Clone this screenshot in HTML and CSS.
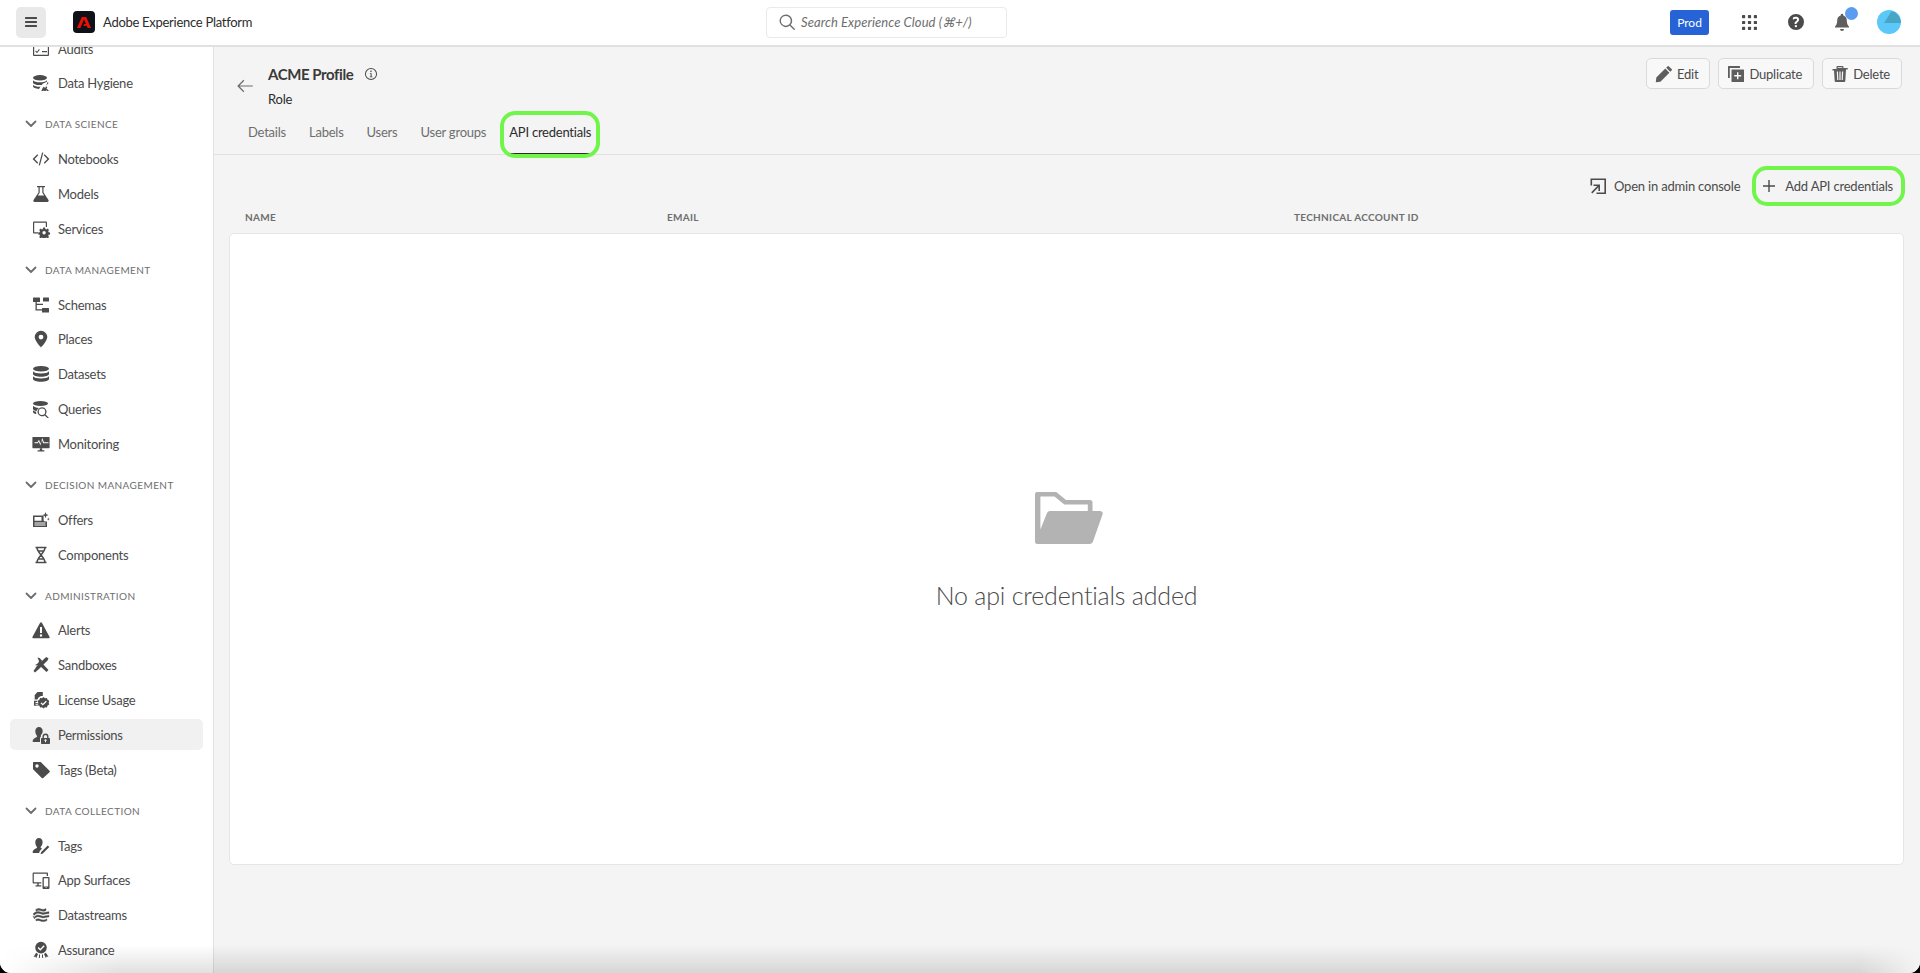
FILE: index.html
```html
<!DOCTYPE html>
<html lang="en">
<head>
<meta charset="utf-8">
<title>Adobe Experience Platform</title>
<link rel="stylesheet" href="styles.css">
</head>
<body>
<div class="app">
  <header class="topbar">
    <div class="brand">
      <button class="menu-btn" aria-label="Menu"><svg class="ico" viewBox="0 0 18 18"><rect x="3" y="4" width="12" height="2" rx=".6"/><rect x="3" y="8" width="12" height="2" rx=".6"/><rect x="3" y="12" width="12" height="2" rx=".6"/></svg></button>
      <div class="logo"><svg viewBox="0 0 22 22"><path fill="#eb1000" d="M8.800 6h4.400L18 17h-3.300l-.9-2.300h-3.600L11.100 13H13l-2-4.700L7.400 17H4z"/></svg></div>
      <span class="product">Adobe Experience Platform</span>
    </div>
    <div class="search">
      <svg class="ico search-ico" viewBox="0 0 18 18"><path d="M7.800 1.500a6.300 6.300 0 0 1 4.900 10.300l4 4a.7.7 0 0 1-1 1l-4-4A6.300 6.300 0 1 1 7.800 1.500zm0 1.400a4.900 4.900 0 1 0 0 9.800 4.900 4.900 0 0 0 0-9.800z"/></svg>
      <span>Search Experience Cloud (⌘+/)</span>
    </div>
    <div class="top-right">
      <span class="prod">Prod</span>
      <svg class="ico apps" viewBox="0 0 16 16"><rect x="0" y="0" width="3.400" height="3.400" rx=".7"/><rect x="6.300" y="0" width="3.400" height="3.400" rx=".7"/><rect x="12.600" y="0" width="3.400" height="3.400" rx=".7"/><rect x="0" y="6.300" width="3.400" height="3.400" rx=".7"/><rect x="6.300" y="6.300" width="3.400" height="3.400" rx=".7"/><rect x="12.600" y="6.300" width="3.400" height="3.400" rx=".7"/><rect x="0" y="12.600" width="3.400" height="3.400" rx=".7"/><rect x="6.300" y="12.600" width="3.400" height="3.400" rx=".7"/><rect x="12.600" y="12.600" width="3.400" height="3.400" rx=".7"/></svg>
      <svg class="ico help" viewBox="0 0 18 18"><path fill-rule="evenodd" d="M9 1a8 8 0 1 1 0 16A8 8 0 0 1 9 1zm-.1 10.900a1.200 1.200 0 1 0 0 2.400 1.200 1.200 0 0 0 0-2.400zM9.100 3.800c-1.300 0-2.500.4-3.200 1v1.900c.8-.6 1.800-1 2.800-1 .9 0 1.400.4 1.400 1 0 .6-.5 1-1.200 1.600-.9.7-1.300 1.300-1.300 2.200v.6h1.900v-.4c0-.5.3-.8 1-1.400.9-.7 1.600-1.500 1.600-2.700 0-1.700-1.300-2.800-3-2.800z"/></svg>
      <span class="bell-wrap">
        <svg class="ico bell" viewBox="0 0 18 18"><path d="M9 .8a1.300 1.300 0 0 1 1.300 1.300v.5c2.300.6 3.500 2.600 3.500 5 0 3.200.9 4.800 2.200 6v1H2v-1c1.300-1.200 2.200-2.800 2.200-6 0-2.400 1.200-4.400 3.500-5v-.5A1.300 1.300 0 0 1 9 .8zM7 16h4a2 2 0 0 1-4 0z"/></svg>
        <span class="dot"></span>
      </span>
      <svg class="avatar" viewBox="0 0 24 24"><circle cx="12" cy="12" r="12" fill="#5cc8f9"/><path fill="#48a5c6" d="M14.500 1.300A12 12 0 0 1 24 12v1H7z"/></svg>
    </div>
  </header>

  <div class="body">
    <nav class="sidebar">
      <div class="nav-inner">
        <a class="nav-item"><svg class="ico" viewBox="0 0 18 18"><path fill-rule="evenodd" d="M2 2h14a1 1 0 0 1 1 1v12a1 1 0 0 1-1 1H2a1 1 0 0 1-1-1V3a1 1 0 0 1 1-1zm.2 1.200v11.600h13.600V3.200z"/><path d="M4 10.500l1 1.200 2-2.600.8.600-2.800 3.600-1.800-2.100zM10 11h5v1.200h-5z"/></svg>Audits</a>
        <a class="nav-item"><svg class="ico" viewBox="0 0 18 18"><ellipse cx="8" cy="3.800" rx="7" ry="2.700"/><path d="M1 6.200c1 1.400 3.800 2.100 7 2.100s6-.7 7-2.100v1.500l-4 1.900-1.300 1.300c-.5 0-1.100.1-1.700.1-3.900 0-7-1.100-7-2.600zM1 10.700c1 1.400 3.800 2.100 7 2.100h.4L7 14.900C3.600 14.700 1 13.600 1 12.300z"/><path d="M15.600 8.100l1 .8-2.700 3 1.500 1.500-1 .9L17 17h-2l-.9-1-.3 1h-1.600l-.2-1-.5 1H9.300l1.500-3.300 1-1 1.500 1.300z"/></svg>Data Hygiene</a>

        <div class="nav-head"><svg class="chev" viewBox="0 0 12 8"><path d="M1.500 1.500L6 6l4.500-4.500" fill="none" stroke="currentColor" stroke-width="1.800" stroke-linecap="round" stroke-linejoin="round"/></svg>Data Science</div>
        <a class="nav-item"><svg class="ico" viewBox="0 0 18 18"><path d="M5.300 4.300l.9 1-3.600 3.700 3.600 3.700-.9 1L.6 9zM12.700 4.300l4.700 4.700-4.700 4.700-.9-1 3.600-3.700-3.600-3.700zM10.100 2.500l1.200.3-3.400 12.700-1.200-.3z"/></svg>Notebooks</a>
        <a class="nav-item"><svg class="ico" viewBox="0 0 18 18"><path d="M5 1h8v1.300h-1.500v5.100L16.500 15a1.300 1.300 0 0 1-1.100 2H2.600a1.300 1.300 0 0 1-1.100-2l5-7.600V2.300H5zm2.700 1.300v5.400L5.900 10.400h6.200l-1.800-2.700V2.300z"/></svg>Models</a>
        <a class="nav-item"><svg class="ico" viewBox="0 0 18 18"><path d="M2 1.500h12a1 1 0 0 1 1 1V7h-1.200V2.700H2.200v9.600H6v1.200H2a1 1 0 0 1-1-1v-10a1 1 0 0 1 1-1z"/><path fill-rule="evenodd" d="M11.200 7.500h1.800l.4 1.500 1 .4 1.300-.8 1.300 1.300-.8 1.300.4 1 1.400.4v1.800l-1.400.4-.4 1 .8 1.300-1.300 1.300-1.300-.8-1 .4-.4 1.300h-1.800l-.4-1.300-1-.4-1.300.8-1.300-1.300.8-1.300-.4-1-1.400-.4v-1.800l1.400-.4.4-1-.8-1.300 1.300-1.300 1.300.8 1-.4zm.9 3.500a1.700 1.700 0 1 0 0 3.400 1.700 1.700 0 0 0 0-3.400z"/></svg>Services</a>

        <div class="nav-head"><svg class="chev" viewBox="0 0 12 8"><path d="M1.500 1.500L6 6l4.500-4.500" fill="none" stroke="currentColor" stroke-width="1.800" stroke-linecap="round" stroke-linejoin="round"/></svg>Data Management</div>
        <a class="nav-item"><svg class="ico" viewBox="0 0 18 18"><rect x="1" y="1.500" width="7" height="4.500" rx=".5"/><rect x="11" y="1.500" width="6" height="4" rx=".5"/><rect x="10" y="12" width="7" height="4.500" rx=".5"/><path d="M3.500 6h1.300v1.700H11V9H4.800v4.200H10v1.300H3.500z"/></svg>Schemas</a>
        <a class="nav-item"><svg class="ico" viewBox="0 0 18 18"><path fill-rule="evenodd" d="M9 .8a6.300 6.300 0 0 1 6.300 6.300C15.300 11 9 17.500 9 17.500S2.700 11 2.700 7.100A6.300 6.300 0 0 1 9 .8zm0 3.900a2.400 2.400 0 1 0 0 4.800 2.400 2.400 0 0 0 0-4.800z"/></svg>Places</a>
        <a class="nav-item"><svg class="ico" viewBox="0 0 18 18"><ellipse cx="9" cy="3.800" rx="8" ry="2.800"/><path d="M1 6.300c1 1.500 4.300 2.200 8 2.200s7-.7 8-2.200V9c0 1.500-3.600 2.700-8 2.700S1 10.500 1 9zM1 11.300c1 1.500 4.300 2.200 8 2.200s7-.7 8-2.200V14c0 1.500-3.600 2.700-8 2.700S1 15.500 1 14z"/></svg>Datasets</a>
        <a class="nav-item"><svg class="ico" viewBox="0 0 18 18"><ellipse cx="8.500" cy="3.500" rx="7.500" ry="2.500"/><path d="M1 5.700c.8 1.200 3.400 2 6 2.200a6 6 0 0 0-2.500 3C2.600 10.600 1 9.800 1 8.700zM1 10.300c.7.700 1.900 1.200 3.200 1.500v2.400C2.400 13.800 1 13 1 12z"/><path fill-rule="evenodd" d="M10 7.300a4.500 4.500 0 0 1 3.600 7.200l3.200 3.200-.9.900-3.200-3.200A4.500 4.500 0 1 1 10 7.300zm0 1.300a3.200 3.200 0 1 0 0 6.400 3.200 3.200 0 0 0 0-6.400z"/></svg>Queries</a>
        <a class="nav-item"><svg class="ico" viewBox="0 0 18 18"><path fill-rule="evenodd" d="M1 2h16a.6.600 0 0 1 .6.600v10a.6.600 0 0 1-.6.600H1a.6.600 0 0 1-.6-.6v-10A.6.600 0 0 1 1 2zm1.500 5.200v1h3.300l1-1.800 1.500 4 1.600-5.400 1.300 3.200h5.300v-1h-4.600L10.300 3l-1.800 5.400L7 4.800 5.300 7.200z"/><path d="M7.800 13.200h2.400v2h2.200v1.300H5.600v-1.300h2.200z"/></svg>Monitoring</a>

        <div class="nav-head"><svg class="chev" viewBox="0 0 12 8"><path d="M1.500 1.500L6 6l4.500-4.500" fill="none" stroke="currentColor" stroke-width="1.800" stroke-linecap="round" stroke-linejoin="round"/></svg>Decision Management</div>
        <a class="nav-item"><svg class="ico" viewBox="0 0 18 18"><path fill-rule="evenodd" d="M1 4.500h10.600v5a2 2 0 0 0 2 1h1.400V16H1zm1.500 1.600v3.700h7V6.100zM2.500 11.500v1h11v-1zm0 2v1h11v-1z"/><path d="M13.500 1l.8 2.300 2.200.8-2.200.8-.8 2.300-.8-2.300-2.200-.8 2.200-.8zM16.300 6.500l.4 1.200 1.100.4-1.100.4-.4 1.200-.4-1.200-1.100-.4 1.100-.4z"/></svg>Offers</a>
        <a class="nav-item"><svg class="ico" viewBox="0 0 18 18"><path fill="none" stroke="currentColor" stroke-width="1.500" d="M3.500 1.500h11M3.500 16.500h11M5 1.500c0 5.500 8 9.500 8 15M13 1.500c0 5.500-8 9.500-8 15M5.800 5h6.400M5.800 13h6.400"/></svg>Components</a>

        <div class="nav-head"><svg class="chev" viewBox="0 0 12 8"><path d="M1.500 1.500L6 6l4.500-4.500" fill="none" stroke="currentColor" stroke-width="1.800" stroke-linecap="round" stroke-linejoin="round"/></svg>Administration</div>
        <a class="nav-item"><svg class="ico" viewBox="0 0 18 18"><path fill-rule="evenodd" d="M9 1.200c.4 0 .7.200.9.500l7.700 14.400c.3.600-.1 1.200-.8 1.200H1.200c-.7 0-1.100-.6-.8-1.200L8.100 1.700c.2-.3.500-.5.900-.5zM8 6v6h2V6zm1 7.300a1.200 1.200 0 1 0 0 2.400 1.200 1.200 0 0 0 0-2.400z"/></svg>Alerts</a>
        <a class="nav-item"><svg class="ico" viewBox="0 0 18 18"><path d="M5.500 1.500l2 .5 2.500 2.500-.5 2 7 7.500-2 2-7.500-7-2 .5L3 9l2-1 1.500-1.500L7 5z"/><path d="M14.500 1l2 1.500-1 2-8.500 8.500-4 3.500-1.500-1.500 3-4.500 8.500-8.500z"/></svg>Sandboxes</a>
        <a class="nav-item"><svg class="ico" viewBox="0 0 18 18"><path d="M5.500 1h5.300v4H9a5.500 5.500 0 0 0-3.600 3.600H2.700V4zM2 9.800h3.300c0 .4 0 .8.100 1.200H3.500v1.200h2.200c.2.400.4.800.7 1.100H3.500v1.200H7.500c.3.200.6.400.9.500H3a1 1 0 0 1-1-1z"/><path fill-rule="evenodd" d="M11.500 6l1.500 1.200 1.900-.2.700 1.800 1.600 1-.5 1.900.5 1.900-1.600 1-.7 1.800-1.900-.2-1.500 1.200-1.500-1.200-1.900.2-.7-1.800-1.600-1 .5-1.900-.5-1.900 1.600-1 .7-1.800 1.900.2zm2.400 3.800l-3.100 3-1.400-1.400-.9.900 2.300 2.300 4-3.900z"/></svg>License Usage</a>
        <a class="nav-item active"><svg class="ico" viewBox="0 0 18 18"><path d="M7 1c2.200 0 3.700 1.800 3.700 4.100 0 1.700-.7 3.100-1.800 4v1.300a4 4 0 0 0-.9 2.400V16H1.500a.9.900 0 0 1-.9-1.100c.4-2.100 2.500-3 3.800-3.700.6-.3.700-.7.700-1.200C4.100 9.200 3.300 7.400 3.300 5.100 3.300 2.800 4.800 1 7 1z"/><path fill-rule="evenodd" d="M13.500 7.500a3 3 0 0 1 3 3V12h.7a.8.800 0 0 1 .8.800v4.400a.8.800 0 0 1-.8.800H9.800a.8.800 0 0 1-.8-.8v-4.400a.8.800 0 0 1 .8-.8h.7v-1.500a3 3 0 0 1 3-3zm0 1.400a1.600 1.600 0 0 0-1.600 1.600V12h3.200v-1.500a1.600 1.600 0 0 0-1.600-1.600zm0 4.400a1 1 0 0 0-.5 1.900v1h1v-1a1 1 0 0 0-.5-1.900z"/></svg>Permissions</a>
        <a class="nav-item"><svg class="ico" viewBox="0 0 18 18"><path fill-rule="evenodd" d="M1.500 1h6.700c.3 0 .6.100.8.300l8.500 8.500a1 1 0 0 1 0 1.400L11.200 17a1 1 0 0 1-1.400 0L1.300 8.500a1 1 0 0 1-.3-.8V1.500a.5.500 0 0 1 .5-.5zM5 3.300a1.700 1.700 0 1 0 0 3.400 1.700 1.700 0 0 0 0-3.400z"/></svg>Tags (Beta)</a>

        <div class="nav-head"><svg class="chev" viewBox="0 0 12 8"><path d="M1.500 1.500L6 6l4.500-4.500" fill="none" stroke="currentColor" stroke-width="1.800" stroke-linecap="round" stroke-linejoin="round"/></svg>Data Collection</div>
        <a class="nav-item"><svg class="ico" viewBox="0 0 18 18"><path d="M7 1c2.200 0 3.600 1.800 3.600 4 0 2.200-.8 4-2 4.900 0 .6.100 1 .7 1.300l.8.400-2.300 2.400-.7 2H1.500a.9.900 0 0 1-.9-1.100c.4-2.100 2.500-3 3.800-3.700.6-.3.700-.7.700-1.200C4 9.200 3.300 7.300 3.300 5 3.300 2.800 4.800 1 7 1z"/><path d="M15.700 8.500l1.600 1.600-6.500 6.500-2.300.7.700-2.300z"/></svg>Tags</a>
        <a class="nav-item"><svg class="ico" viewBox="0 0 18 18"><path d="M1.500 1.500h13.600a.9.900 0 0 1 .9.900V5h-1.300V2.800H1.800v8.400h7.500v1.300H6.700v1.800h2.600v1.200H3.500v-1.200h1.800v-1.800H1.500a.9.900 0 0 1-.9-.9V2.400a.9.900 0 0 1 .9-.9z"/><path fill-rule="evenodd" d="M11.500 6h5a1 1 0 0 1 1 1v10a1 1 0 0 1-1 1h-5a1 1 0 0 1-1-1V7a1 1 0 0 1 1-1zm.3 1.300v8.300h4.400V7.300zm2.200 8.800a.5.500 0 1 0 0 1 .5.500 0 0 0 0-1z"/></svg>App Surfaces</a>
        <a class="nav-item"><svg class="ico heavy" viewBox="0 0 18 18"><path d="M7 2.500c1.800 0 2.500 1 4 1 1.300 0 2-.5 3-.9v1.800c-1 .5-1.800.9-3 .9-1.600 0-2.300-1-4-1-1.100 0-1.700.4-2.300.9L3.400 4C4.200 3.200 5.400 2.500 7 2.500zM1 8c1.300-1.500 2.800-2.500 5-2.500s3.300 1.200 5 1.200c1.600 0 3.100-.9 6-1v1.700c-2.500.1-4 1-6 1-1.800 0-3-1.200-5-1.200C4.500 7.200 3.500 8 2.300 9.200zM1 9.800l1.300 1.200c1.200-1.200 2.200-2 3.700-2 2 0 3.200 1.200 5 1.200 2 0 3.500-.9 6-1v1.700c-2.500.1-4 1-6 1-1.800 0-3-1.200-5-1.200-1.500 0-2.500.8-3.700 2zM3.500 13.700c.7-.5 1.500-1 2.500-1 1.800 0 2.800 1.200 5 1.200 1.800 0 2.800-.5 4-1v1.700c-1.200.5-2.200 1-4 1-2.200 0-3.200-1.200-5-1.200-.6 0-1.100.2-1.500.5z"/></svg>Datastreams</a>
        <a class="nav-item"><svg class="ico" viewBox="0 0 18 18"><path fill-rule="evenodd" d="M9 .8a5.800 5.800 0 1 1 0 11.600A5.800 5.800 0 0 1 9 .8zm2.700 3.400L8.300 7.700 6.600 6 5.600 7l2.700 2.700 4.400-4.500z"/><path d="M4.200 11.800l1.800 1.200-1.800 4.200-.9-1.600-1.800.3zM13.800 11.800l2.700 3.900-1.800-.3-.9 1.600L12 13z"/><path d="M7 13.400l1 .2v2.800l-1.300.8.300-1.800zM11 13.400l-1 .2v2.800l1.300.8-.3-1.800z"/></svg>Assurance</a>
      </div>
    </nav>

    <main class="main">
      <section class="page-head">
        <svg class="back" viewBox="0 0 18 18"><path d="M7.400 2.800l.9.900L3.600 8.400h13.200v1.200H3.600l4.700 4.700-.9.900L1.200 9z"/></svg>
        <div class="titles">
          <div class="title-row"><h1>ACME Profile</h1><svg class="info" viewBox="0 0 18 18"><path fill-rule="evenodd" d="M9 1.200a7.800 7.800 0 1 1 0 15.600A7.800 7.800 0 0 1 9 1.200zm0 1.300a6.500 6.500 0 1 0 0 13 6.500 6.500 0 0 0 0-13zM9 4.500a1 1 0 1 1 0 2.100 1 1 0 0 1 0-2.100zM7.500 8h2.300v4.200h1v1.100H7.400v-1.100h1.100V9.100h-1z"/></svg></div>
          <div class="subtitle">Role</div>
        </div>
        <div class="actions">
          <button class="btn"><svg class="ico" viewBox="0 0 18 18"><path d="M13.700 1.200l3.100 3.100a.7.700 0 0 1 0 1L15.300 6.800l-4.100-4.100 1.500-1.500a.7.700 0 0 1 1 0zM10.300 3.600l4.100 4.100-9 9L.8 17.200l.5-4.600z"/></svg>Edit</button>
          <button class="btn"><svg class="ico" viewBox="0 0 18 18"><path d="M1.500 1h11a.5.500 0 0 1 .5.500V3H2.800v10H1.500a.5.500 0 0 1-.5-.5v-11a.5.500 0 0 1 .5-.5z"/><path fill-rule="evenodd" d="M5 4.500h11.500a.5.500 0 0 1 .5.500v11.500a.5.500 0 0 1-.5.500H5a.5.500 0 0 1-.5-.5V5a.5.500 0 0 1 .5-.5zm5 2.800v2.800H7.200v1.400H10v2.800h1.400v-2.800h2.800v-1.400h-2.800V7.300z"/></svg>Duplicate</button>
          <button class="btn"><svg class="ico" viewBox="0 0 18 18"><path fill-rule="evenodd" d="M6.500 1h5a1 1 0 0 1 1 1v1h3.800a.5.500 0 0 1 .5.500v.7a.3.300 0 0 1-.3.300H15l-.7 11.600a1 1 0 0 1-1 .9H4.700a1 1 0 0 1-1-.9L3 5.500H1.700a.3.300 0 0 1-.3-.3v-.7a.5.500 0 0 1 .5-.5h3.600V2a1 1 0 0 1 1-1zm.2 1.200V3h4.600v-.8zM5.800 6.500l.4 8.500h1.200L7 6.500zm2.600 0V15h1.200V6.500zm3.800 0L11 6.500l-.4 8.500h1.200z"/></svg>Delete</button>
        </div>
      </section>
      <div class="tabs">
        <span class="tab">Details</span>
        <span class="tab">Labels</span>
        <span class="tab">Users</span>
        <span class="tab">User groups</span>
        <span class="tab selected">API credentials</span>
      </div>
      <div class="toolbar">
        <a class="tool"><svg class="ico" viewBox="0 0 18 18"><path d="M1.500 1.500h15.500v15.500H7.500v-1.600h7.900V3.100H3.100v5.400H1.500z"/><path d="M4.500 7.500h6.500V14H9.400v-3.700L3.300 16.400l-1.100-1.100 6.100-6.200H4.500z"/></svg>Open in admin console</a>
        <a class="tool add"><svg class="ico" viewBox="0 0 18 18"><path d="M8.300 3h1.400v5.300H15v1.400H9.700V15H8.300V9.700H3V8.300h5.300z"/></svg>Add API credentials</a>
      </div>
      <div class="cols">
        <span class="col-name">Name</span>
        <span class="col-email">Email</span>
        <span>Technical account ID</span>
      </div>
      <div class="card">
        <svg class="folder" viewBox="0 0 68 52"><path fill="#b3b3b3" d="M2 0h18c1.200 0 2 .4 2.800 1.200L31 8h24a2.500 2.500 0 0 1 2.500 2.500V19h7.500c2 0 3.200 1.500 2.600 3.300L58 49.500c-.6 1.600-1.700 2.500-3.400 2.500H2.500A2.500 2.500 0 0 1 0 49.500V2a2 2 0 0 1 2-2zm3.400 4.400v33L12 21c.6-1.300 1.700-2 3-2h37.800v-6.400H29.300L19.500 4.400z"/></svg>
        <p class="empty">No api credentials added</p>
      </div>
    </main>
  </div>
  <div class="bottom-shade"></div>
</div>
</body>
</html>
```

FILE: styles.css
```css
* { box-sizing: border-box; }
html, body { height: 100%; }
body { margin: 0; background: #000; font-family: "Lato", "Open Sans", sans-serif; color: #4b4b4b; overflow: hidden; }
.app { position: relative; height: 973px; display: flex; flex-direction: column; background: #fff; border-radius: 0 0 11px 11px; overflow: hidden; }
.ico { width: 18px; height: 18px; fill: currentColor; flex: none; }
.ico.heavy { stroke: currentColor; stroke-width: .4; }

.topbar { flex: none; height: 47px; display: flex; align-items: center; background: #fff; border-bottom: 2px solid #e1e1e1; padding-bottom: 1px; }
.brand { flex: 0 0 766px; display: flex; align-items: center; padding-left: 16px; }
.menu-btn { width: 30px; height: 31px; border: 0; border-radius: 5px; background: #e9e9e9; color: #4b4b4b; display: flex; align-items: center; justify-content: center; padding: 0; }
.logo { width: 22px; height: 22px; margin-left: 27px; background: #0f1118; border-radius: 4px; display: flex; }
.logo svg { width: 22px; height: 22px; }
.product { margin-left: 8px; font-size: 13px; letter-spacing: -.28px; color: #2c2c2c; }
.search { flex: 0 0 241px; height: 31px; border: 1px solid #eaeaea; border-radius: 4px; display: flex; align-items: center; padding-left: 11px; gap: 5px; font-size: 13px; letter-spacing: .08px; font-style: italic; color: #6e6e6e; }
.search-ico { color: #6e6e6e; }
.top-right { margin-left: auto; display: flex; align-items: center; padding-right: 19px; }
.prod { width: 39px; height: 25px; background: #2563d6; color: #fff; border-radius: 3px; font-size: 12px; display: flex; align-items: center; justify-content: center; }
.apps { width: 15px; height: 15px; margin-left: 33px; color: #4b4b4b; }
.help { margin-left: 30px; width: 18px; height: 18px; }
.bell-wrap { position: relative; display: flex; margin-left: 28px; }
.bell { color: #5e5e5e; }
.dot { position: absolute; width: 13px; height: 13px; border-radius: 50%; background: #5b9cf0; top: -6px; right: -7px; }
.avatar { width: 24px; height: 24px; margin-left: 26px; }

.body { flex: 1; min-height: 0; display: flex; }
.sidebar { flex: 0 0 214px; background: #fff; border-right: 1px solid #e1e1e1; overflow: hidden; }
.nav-inner { margin-top: -14px; padding-left: 10px; padding-right: 10px; }
.nav-item { height: 31px; margin-bottom: 3.800px; display: flex; align-items: center; padding-left: 22px; gap: 8px; font-size: 13px; letter-spacing: -.25px; color: #4b4b4b; border-radius: 5px; }
.nav-item.active { background: #f1f1f1; }
.nav-head { height: 31px; margin-top: 10.100px; margin-bottom: 3.800px; display: flex; align-items: center; padding-left: 15px; gap: 8px; font-size: 10px; letter-spacing: .04em; text-transform: uppercase; color: #6e6e6e; }
.chev { width: 12px; height: 8px; color: #6e6e6e; flex: none; }

.main { flex: 1; min-width: 0; background: #f4f4f4; display: flex; flex-direction: column; padding: 0 16px 0 15px; }
.page-head { flex: none; height: 71px; display: flex; align-items: flex-start; padding-top: 11px; padding-left: 7px; }
.back { width: 18px; height: 18px; margin-top: 19px; fill: #6e6e6e; flex: none; }
.titles { margin-left: 14px; }
.title-row { display: flex; align-items: center; gap: 11px; height: 31px; }
h1 { margin: 0; font-size: 15px; font-weight: 700; letter-spacing: -.42px; color: #3a3a3a; }
.info { width: 14px; height: 14px; fill: #4b4b4b; }
.subtitle { font-size: 13px; letter-spacing: -.2px; color: #2c2c2c; margin-top: 2px; }
.actions { margin-left: auto; display: flex; gap: 8px; margin-right: 2px; }
.btn { height: 31px; padding: 0 11px 0 8px; border: 1px solid #dadada; border-radius: 5px; background: #f8f8f8; display: flex; align-items: center; gap: 4px; font: inherit; font-size: 13px; letter-spacing: -.2px; color: #4b4b4b; }
.btn .ico { color: #5e5e5e; }

.tabs { flex: none; height: 37px; margin: 0 -16px 0 -15px; padding: 0 0 0 34px; display: flex; gap: 23px; border-bottom: 1px solid #e1e1e1; }
.tab { position: relative; font-size: 13px; letter-spacing: -.23px; color: #6e6e6e; height: 37px; padding-top: 6px; }
.tab.selected { color: #2c2c2c; border-bottom: 2px solid #2c2c2c; }
.tab.selected::after, .tool.add::after { content: ""; position: absolute; border: 4px solid #72f54a; border-radius: 15px; pointer-events: none; }
.tab.selected::after { left: -9px; right: -9px; top: -7px; height: 39px; }

.toolbar { flex: none; height: 42px; margin-top: 9px; padding-top: 2px; display: flex; justify-content: flex-end; align-items: center; gap: 19px; padding-right: 11px; }
.tool { position: relative; display: flex; align-items: center; gap: 7px; font-size: 13px; letter-spacing: -.2px; color: #4b4b4b; }
.tool.add { margin-left: 1px; }
.tool.add::after { left: -8px; right: -12px; top: -11px; bottom: -11px; }
.cols { flex: none; height: 22px; display: flex; font-size: 10px; font-weight: 700; letter-spacing: .03em; text-transform: uppercase; color: #6e6e6e; padding-left: 16px; align-items: center; }
.col-name { flex: 0 0 422px; }
.col-email { flex: 0 0 627px; }
.card { flex: none; height: 632px; margin-top: 5px; background: #fff; border: 1px solid #e6e6e6; border-radius: 5px; display: flex; flex-direction: column; align-items: center; padding-top: 258px; }
.folder { width: 68px; height: 52px; margin-left: 5px; }
.empty { margin: 38px 0 0; font-size: 25px; letter-spacing: -.2px; font-weight: 300; color: #4b4b4b; line-height: 1.1; }
.bottom-shade { position: absolute; left: 0; right: 0; bottom: 0; height: 28px; pointer-events: none; background: linear-gradient(to bottom, rgba(0,0,0,0), rgba(0,0,0,.12)); -webkit-mask-image: linear-gradient(to right, transparent 0, #000 120px, #000 calc(100% - 60px), transparent 100%); mask-image: linear-gradient(to right, transparent 0, #000 120px, #000 calc(100% - 60px), transparent 100%); }
```
